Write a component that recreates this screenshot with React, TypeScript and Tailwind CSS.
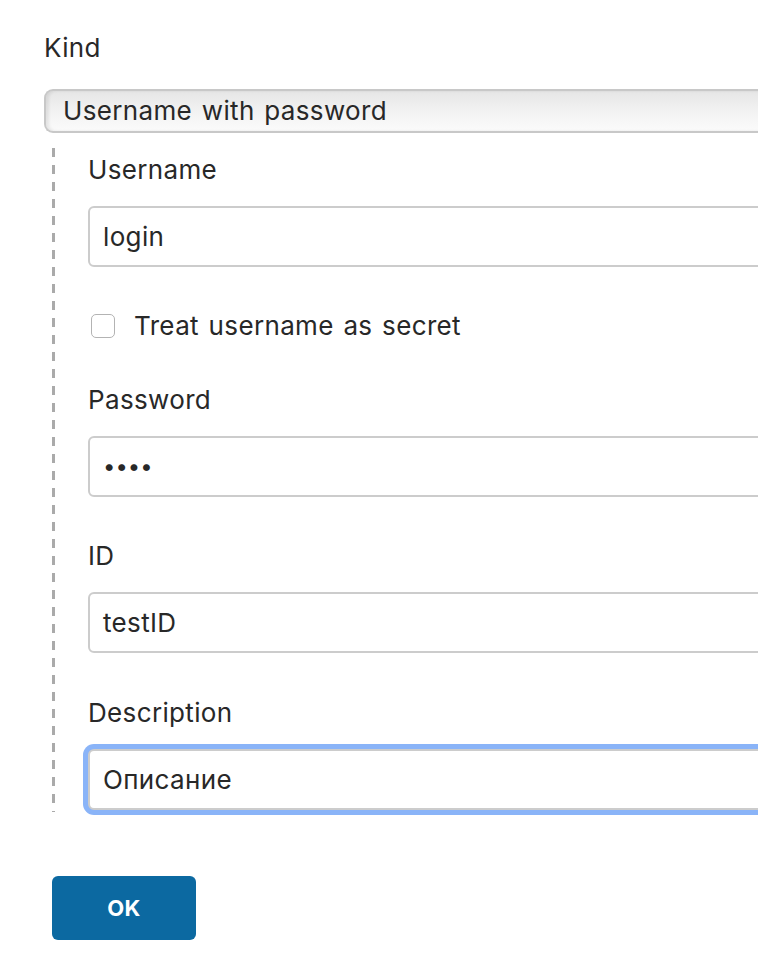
import React from 'react';

const Field: React.FC<{
  label: string;
  value: string;
  focused?: boolean;
  valueClass?: string;
  className?: string;
}> = ({ label, value, focused, valueClass = 'text-[26px]', className = '' }) => (
  <div className={className}>
    <label className="block text-[26px] leading-[36px]">{label}</label>
    <div
      className={`mt-[18px] h-[61px] w-[700px] rounded-[6px] border-2 border-[#ccc] bg-white pl-[13px] flex items-center ${valueClass} ${
        focused ? 'ring-[5px] ring-[#8ab4f8]' : ''
      }`}
    >
      {value}
    </div>
  </div>
);

const App: React.FC = () => {
  return (
    <div className="min-h-screen w-full overflow-hidden bg-white pl-[44px] pt-[30px] font-['Inter','Liberation_Sans',sans-serif] tracking-[0.35px] [word-spacing:2px] text-[#282828]">
      <label className="block text-[26px] leading-[36px]">Kind</label>

      <div className="mt-[23px] h-[44px] w-[760px] rounded-l-[9px] border-2 border-r-0 border-[#c8c8c8] bg-gradient-to-b from-[#e6e6e6] via-[#f2f2f2] to-[#fbfbfb] pl-[17px] flex items-center text-[26px] leading-none shadow-[inset_3px_0_3px_rgba(0,0,0,0.08)]">
        Username with password
      </div>

      <div className="ml-[8px] mt-[15px] flex">
        <div className="w-[3px] shrink-0 bg-[repeating-linear-gradient(to_bottom,#aaa_0px,#aaa_9px,transparent_9px,transparent_17px)]"></div>
        <div className="pl-[33px] pt-[4px] pb-[2px]">
          <Field label="Username" value="login" />

          <div className="mt-[41px] flex h-[36px] items-center">
            <span className="ml-[3px] h-[24px] w-[24px] rounded-[5px] border border-[#b3b3b3] bg-white"></span>
            <span className="ml-[19px] text-[26px] leading-[36px]">Treat username as secret</span>
          </div>

          <Field label="Password" value="••••" valueClass="text-[22px] tracking-[0px]" className="mt-[38px]" />
          <Field label="ID" value="testID" className="mt-[41px]" />
          <Field label="Description" value="Описание" focused className="mt-[42px]" />
        </div>
      </div>

      <button className="ml-[8px] mt-[64px] h-[64px] w-[144px] rounded-[6px] bg-[#0c69a1] text-[22px] font-bold text-white">
        OK
      </button>
    </div>
  );
};

export default App;
